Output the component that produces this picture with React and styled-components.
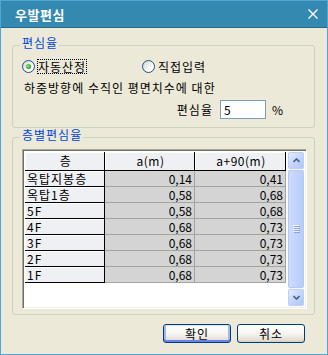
import React from "react";
import styled, { createGlobalStyle } from "styled-components";

const GlobalStyle = createGlobalStyle`
  html, body { margin: 0; padding: 0; background: #ece9d8; }
  body {
    font-family: "Noto Sans CJK KR", "Noto Sans", sans-serif;
    font-size: 12px;
    letter-spacing: 1px;
    color: #000;
  }
  * { box-sizing: border-box; }
`;

const rows = [
  ["옥탑지봉층", "0,14", "0,41"],
  ["옥탑1층", "0,58", "0,68"],
  ["5F", "0,58", "0,68"],
  ["4F", "0,68", "0,73"],
  ["3F", "0,68", "0,73"],
  ["2F", "0,68", "0,73"],
  ["1F", "0,68", "0,73"],
];

const Window = styled.div`
  width: 328px;
  height: 355px;
  border: 1px solid #4fa6d2;
  background: #ece9d8;
  display: flex;
  flex-direction: column;
`;

const TitleBar = styled.div`
  flex: none;
  height: 27px;
  background: #3489b1;
  border-bottom: 1px solid #24688a;
  display: flex;
  align-items: center;
  justify-content: space-between;
  padding: 0 9px 0 14px;
`;

const Title = styled.span`
  color: #fff;
  font-weight: bold;
  font-size: 13px;
  letter-spacing: 0.5px;
  line-height: 1;
`;

const Body = styled.div`
  flex: 1;
  display: flex;
  flex-direction: column;
  padding: 0 12px 0 11px;
`;

const Group = styled.div`
  border: 1px solid #d0d0bf;
  border-radius: 3px;
  margin-top: ${(p) => p.$top}px;
  padding: ${(p) => p.$pad};
`;

const Legend = styled.div`
  width: fit-content;
  height: 14px;
  line-height: 14px;
  margin: -10px 0 0 -2px;
  padding: 0 1px 0 2px;
  background: #ece9d8;
  color: #0046d5;
`;

const RadioRow = styled.div`
  display: flex;
  align-items: center;
  height: 15px;
  margin-top: 9px;
`;

const Option = styled.label`
  display: flex;
  align-items: center;
  width: ${(p) => p.$w}px;
`;

const RadioCircle = styled.span`
  position: relative;
  width: 13px;
  height: 13px;
  border-radius: 50%;
  border: 1px solid #1c5180;
  background: linear-gradient(135deg, #d6d5cc, #fff 75%);
  &::after {
    content: "";
    display: ${(p) => (p.$checked ? "block" : "none")};
    position: absolute;
    left: 3px;
    top: 3px;
    width: 5px;
    height: 5px;
    border-radius: 50%;
    background: radial-gradient(circle at 40% 40%, #8fe38f, #21a121 70%);
  }
`;

const OptionText = styled.span`
  margin-left: 2px;
  height: 15px;
  line-height: 13px;
  padding-right: 0;
  border: 1px ${(p) => (p.$focus ? "dotted #000" : "solid transparent")};
`;

const Description = styled.div`
  margin-top: 7px;
  padding-left: 2px;
  line-height: 14px;
`;

const InputRow = styled.div`
  display: flex;
  align-items: center;
  justify-content: flex-end;
  height: 19px;
  margin-top: 5px;
  padding-right: 22px;
`;

const RateInput = styled.input`
  width: 46px;
  height: 19px;
  margin: 0 6px 0 7px;
  padding: 0 3px;
  border: 1px solid #7f9db9;
  background: #fff;
  font: 12px "Noto Sans CJK KR", sans-serif;
  outline: none;
`;

const GridFrame = styled.div`
  margin-top: 7px;
  height: 160px;
  border: 1px solid;
  border-color: #aca899 #fff #fff #aca899;
  box-shadow: inset 1px 1px 0 #716f64, inset -1px -1px 0 #f1efe2;
  background: #fff;
  padding: 2px;
  display: flex;
  gap: 2px;
`;

const Table = styled.div`
  width: 261px;
  align-self: flex-start;
  display: grid;
  grid-template-columns: 80px 90px 91px;
`;

const HeadCell = styled.div`
  height: ${(p) => (p.$head ? 19 : 16)}px;
  line-height: ${(p) => (p.$head ? 18 : 15)}px;
  background: #eff0f4;
  border-right: 1px solid #000;
  border-bottom: 1px solid #000;
  box-shadow: inset 1px 1px 0 #fff;
  padding-left: 2px;
  letter-spacing: ${(p) => (p.$head ? 0.5 : 1)}px;
  text-align: ${(p) => (p.$head ? "center" : "left")};
  white-space: nowrap;
`;

const DataCell = styled.div`
  height: 16px;
  line-height: 15px;
  background: #d4d4d4;
  border-right: 1px solid #a5a49e;
  border-bottom: 1px solid #a5a49e;
  padding-right: 2px;
  letter-spacing: 0;
  text-align: right;
`;

const Scrollbar = styled.div`
  width: 16px;
  display: flex;
  flex-direction: column;
  background: #f7f6f2;
`;

const ScrollButton = styled.div`
  height: 17px;
  border: 1px solid #bccdf7;
  border-radius: 2px;
  background: linear-gradient(135deg, #e3ebfe, #c0d2fb 60%, #b2c6f5);
  display: flex;
  align-items: center;
  justify-content: center;
`;

const Thumb = styled.div`
  flex: 1;
  margin: 1px 0;
  border: 1px solid #b5c8f5;
  border-radius: 2px;
  background: linear-gradient(90deg, #cddbfd, #c2d4fc 50%, #b9cdf9);
  display: flex;
  align-items: center;
  justify-content: center;
`;

const ButtonRow = styled.div`
  display: flex;
  justify-content: flex-end;
  gap: 6px;
  margin-top: 9px;
  padding-right: 10px;
`;

const Button = styled.button`
  width: 68px;
  height: 19px;
  padding: 0;
  border: 1px solid #003c74;
  border-radius: 3px;
  background: linear-gradient(#fff, #f4f3ee 55%, #dcd7cb);
  font: 12px "Noto Sans CJK KR", sans-serif;
  letter-spacing: 1px;
  line-height: 16px;
  color: #000;
  box-shadow: ${(p) =>
    p.$default
      ? "inset 0 1px 0 #cee7ff, inset 0 -2px 0 #6982ee, inset 2px 0 0 #9fbaf0, inset -2px 0 0 #9fbaf0"
      : "inset 0 -1px 0 #d6d0c5"};
`;

const Chevron = ({ up }) => (
  <svg width="7" height="5" viewBox="0 0 7 5">
    <path
      d={up ? "M0.5 4 L3.5 1 L6.5 4" : "M0.5 1 L3.5 4 L6.5 1"}
      fill="none"
      stroke="#4d6185"
      strokeWidth="1.6"
    />
  </svg>
);

const Grip = () => (
  <svg width="7" height="8" viewBox="0 0 7 8">
    {[0, 2, 4, 6].map((y) => (
      <g key={y}>
        <rect x="0" y={y} width="6" height="1" fill="#eef4fe" />
        <rect x="1" y={y + 1} width="6" height="1" fill="#8ca4e0" />
      </g>
    ))}
  </svg>
);

export default function App() {
  return (
    <>
      <GlobalStyle />
      <Window>
        <TitleBar>
          <Title>우발편심</Title>
          <svg width="10" height="10" viewBox="0 0 10 10">
            <path d="M0.5 0.5 L9.5 9.5 M9.5 0.5 L0.5 9.5" stroke="#fff" strokeWidth="1.4" />
          </svg>
        </TitleBar>
        <Body>
          <Group $top={17} $pad="0 8px 8px 9px">
            <Legend>편심율</Legend>
            <RadioRow>
              <Option $w={120}>
                <RadioCircle $checked />
                <OptionText $focus>자동산정</OptionText>
              </Option>
              <Option $w={80}>
                <RadioCircle />
                <OptionText>직접입력</OptionText>
              </Option>
            </RadioRow>
            <Description>하중방향에 수직인 평면치수에 대한</Description>
            <InputRow>
              <span>편심율</span>
              <RateInput defaultValue="5" />
              <span>%</span>
            </InputRow>
          </Group>
          <Group $top={9} $pad="0 7px 5px 9px">
            <Legend>층별편심율</Legend>
            <GridFrame>
              <Table>
                <HeadCell $head>층</HeadCell>
                <HeadCell $head>a(m)</HeadCell>
                <HeadCell $head>a+90(m)</HeadCell>
                {rows.map(([name, a, b]) => (
                  <React.Fragment key={name}>
                    <HeadCell>{name}</HeadCell>
                    <DataCell>{a}</DataCell>
                    <DataCell>{b}</DataCell>
                  </React.Fragment>
                ))}
              </Table>
              <Scrollbar>
                <ScrollButton>
                  <Chevron up />
                </ScrollButton>
                <Thumb>
                  <Grip />
                </Thumb>
                <ScrollButton>
                  <Chevron />
                </ScrollButton>
              </Scrollbar>
            </GridFrame>
          </Group>
          <ButtonRow>
            <Button $default>확인</Button>
            <Button>취소</Button>
          </ButtonRow>
        </Body>
      </Window>
    </>
  );
}
